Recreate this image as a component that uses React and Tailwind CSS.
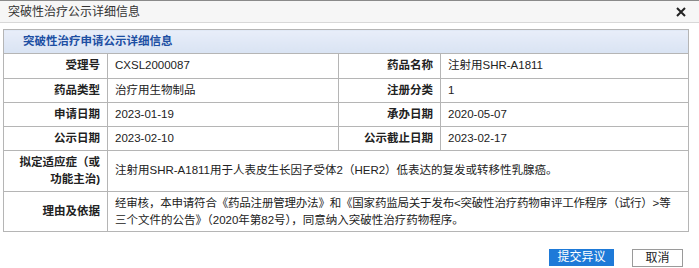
import React from "react";

const font = { fontFamily: '"Liberation Sans","Noto Sans CJK SC",sans-serif' };

function Label({ children, className = "" }) {
  return (
    <td className={`border border-[#b5b5b5] pr-[7px] text-right font-bold text-[#222] ${className}`}>
      {children}
    </td>
  );
}
function Value({ children, colSpan, className = "" }) {
  return (
    <td colSpan={colSpan} className={`border border-[#b5b5b5] pl-[7px] text-left text-[#222] ${className}`}>
      {children}
    </td>
  );
}

export default function App() {
  return (
    <div className="w-[699px] h-[268px] overflow-hidden bg-white text-[11.5px]" style={font}>
      <div className="flex h-[23px] items-center justify-between border-t border-[#8a8a8a] border-b border-b-[#d8d8d8] bg-[#f6f6f6] pl-[8px] pr-[13px]">
        <span className="text-[12px] text-[#333]">突破性治疗公示详细信息</span>
        <svg width="10" height="10" viewBox="0 0 10 10">
          <path d="M1 1 L9 9 M9 1 L1 9" stroke="#222" strokeWidth="2" />
        </svg>
      </div>
      <div className="pl-[3px] pt-[6px]">
        <table className="w-[685px] border-collapse table-fixed">
          <colgroup>
            <col className="w-[104px]" />
            <col className="w-[231px]" />
            <col className="w-[102px]" />
            <col className="w-[248px]" />
          </colgroup>
          <tbody>
            <tr className="h-[24px]">
              <td colSpan={4} className="border border-[#b5b5b5] bg-gradient-to-b from-[#e8eef9] to-[#d9e3f3] pl-[19px] font-bold text-[#1d4fa3]">
                突破性治疗申请公示详细信息
              </td>
            </tr>
            <tr className="h-[25px]">
              <Label>受理号</Label>
              <Value>CXSL2000087</Value>
              <Label>药品名称</Label>
              <Value>注射用SHR-A1811</Value>
            </tr>
            <tr className="h-[24px]">
              <Label>药品类型</Label>
              <Value>治疗用生物制品</Value>
              <Label>注册分类</Label>
              <Value>1</Value>
            </tr>
            <tr className="h-[24px]">
              <Label>申请日期</Label>
              <Value>2023-01-19</Value>
              <Label>承办日期</Label>
              <Value>2020-05-07</Value>
            </tr>
            <tr className="h-[24px]">
              <Label>公示日期</Label>
              <Value>2023-02-10</Value>
              <Label>公示截止日期</Label>
              <Value>2023-02-17</Value>
            </tr>
            <tr className="h-[41px]">
              <Label className="leading-[17px]">
                拟定适应症（或<br />功能主治)
              </Label>
              <Value colSpan={3}>
                注射用SHR-A1811用于人表皮生长因子受体2（HER2）低表达的复发或转移性乳腺癌。
              </Value>
            </tr>
            <tr className="h-[40px]">
              <Label>理由及依据</Label>
              <Value colSpan={3} className="leading-[17px]">
                <span className="whitespace-nowrap tracking-[-0.2px]">
                  经审核，本申请符合《药品注册管理办法》和《国家药监局关于发布&lt;突破性治疗药物审评工作程序（试行）&gt;等
                </span>
                <br />
                三个文件的公告》（2020年第82号），同意纳入突破性治疗药物程序。
              </Value>
            </tr>
          </tbody>
        </table>
      </div>
      <div className="flex justify-end gap-[18px] pr-[16px] pt-[17px]">
        <button className="h-[17px] w-[65px] bg-[#1e7ad8] text-[12px] leading-[17px] text-white">
          提交异议
        </button>
        <button className="h-[18px] w-[51px] border border-[#9a9a9a] bg-white text-[12px] leading-[16px] text-[#222]">
          取消
        </button>
      </div>
    </div>
  );
}
